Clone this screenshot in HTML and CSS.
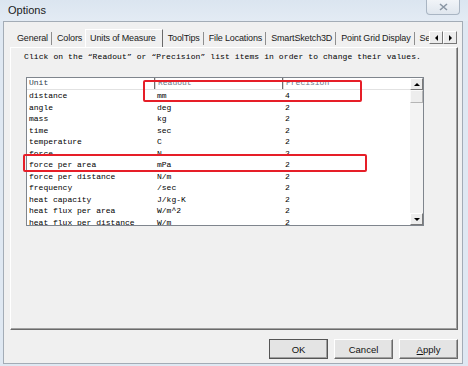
FILE: index.html
```html
<!DOCTYPE html>
<html>
<head>
	<title>Options</title>
	<meta charset="UTF-8">
	<link rel="stylesheet" href="styles.css">
</head>
<body>
	<div class="titlebar">
		<span class="title">Options</span>
		<span class="close-btn">
			<svg width="9" height="8" viewBox="0 0 9 8"><path d="M1 1 L8 7 M8 1 L1 7" stroke="#8a96a4" stroke-width="1.6" fill="none"/></svg>
		</span>
	</div>
	<div class="window">
		<div class="tabs">
			<div class="tab-list">
				<span class="tab">General</span>
				<span class="tab tab-before">Colors</span>
				<span class="tab tab-active">Units of Measure</span>
				<span class="tab">ToolTips</span>
				<span class="tab">File Locations</span>
				<span class="tab">SmartSketch3D</span>
				<span class="tab">Point Grid Display</span>
				<span class="tab tab-last">Se</span>
			</div>
			<div class="tab-arrows">
				<span class="arrow-btn"><i class="tri tri-left"></i></span>
				<span class="arrow-btn"><i class="tri tri-right"></i></span>
			</div>
		</div>
		<div class="panel">
			<p class="hint">Click on the “Readout” or “Precision” list items in order to change their values.</p>
			<div class="list">
				<div class="list-main">
					<div class="list-head">
						<span class="col col-unit">Unit</span>
						<span class="col col-readout">Readout</span>
						<span class="col col-precision">Precision</span>
					</div>
					<div class="list-body">
						<div class="row"><span class="col col-unit">distance</span><span class="col col-readout">mm</span><span class="col col-precision">4</span></div>
						<div class="row"><span class="col col-unit">angle</span><span class="col col-readout">deg</span><span class="col col-precision">2</span></div>
						<div class="row"><span class="col col-unit">mass</span><span class="col col-readout">kg</span><span class="col col-precision">2</span></div>
						<div class="row"><span class="col col-unit">time</span><span class="col col-readout">sec</span><span class="col col-precision">2</span></div>
						<div class="row"><span class="col col-unit">temperature</span><span class="col col-readout">C</span><span class="col col-precision">2</span></div>
						<div class="row"><span class="col col-unit">force</span><span class="col col-readout">N</span><span class="col col-precision">2</span></div>
						<div class="row"><span class="col col-unit">force per area</span><span class="col col-readout">mPa</span><span class="col col-precision">2</span></div>
						<div class="row"><span class="col col-unit">force per distance</span><span class="col col-readout">N/m</span><span class="col col-precision">2</span></div>
						<div class="row"><span class="col col-unit">frequency</span><span class="col col-readout">/sec</span><span class="col col-precision">2</span></div>
						<div class="row"><span class="col col-unit">heat capacity</span><span class="col col-readout">J/kg-K</span><span class="col col-precision">2</span></div>
						<div class="row"><span class="col col-unit">heat flux per area</span><span class="col col-readout">W/m^2</span><span class="col col-precision">2</span></div>
						<div class="row"><span class="col col-unit">heat flux per distance</span><span class="col col-readout">W/m</span><span class="col col-precision">2</span></div>
					</div>
				</div>
				<div class="scrollbar">
					<span class="sb-btn"><i class="tri tri-up"></i></span>
					<span class="sb-thumb"></span>
					<span class="sb-track"></span>
					<span class="sb-btn"><i class="tri tri-down"></i></span>
				</div>
			</div>
			<div class="mark mark-readout"></div>
			<div class="mark mark-row"></div>
		</div>
		<div class="buttons">
			<button class="btn btn-default">OK</button>
			<button class="btn">Cancel</button>
			<button class="btn"><u>A</u>pply</button>
		</div>
	</div>
</body>
</html>
```

FILE: styles.css
```css
body {
	margin: 0;
	width: 468px;
	height: 366px;
	overflow: hidden;
	background-color: #dfe8f2;
	font-family: "Liberation Sans", Arial, sans-serif;
	color: #1a1a1a;
}

.titlebar {
	display: flex;
	justify-content: space-between;
	align-items: flex-start;
	height: 21px;
	background: linear-gradient(#dbe5f0, #e3ebf4);
}

.title {
	margin-left: 8px;
	font-size: 11px;
	line-height: 20px;
}

.close-btn {
	display: flex;
	align-items: center;
	justify-content: center;
	width: 32px;
	height: 14px;
	margin-right: 8px;
	border: 1px solid #a9b5c3;
	border-top: none;
	border-radius: 0 0 4px 4px;
	background: linear-gradient(#f1f4f8, #dfe6ee);
}

.window {
	box-sizing: border-box;
	height: 343px;
	margin: 0 5px 0 3px;
	padding-top: 6px;
	border: 1px solid #a3acb6;
	background-color: #f0f0f0;
}

/* tab strip */

.tabs {
	display: flex;
	align-items: flex-end;
	height: 19px;
	margin: 0 4px 0 6px;
}

.tab-list {
	display: flex;
	align-items: flex-end;
	box-sizing: border-box;
	width: 419px;
	padding-left: 2px;
	overflow: hidden;
	font-size: 9px;
	letter-spacing: -0.15px;
}

.tab {
	flex: none;
	height: 13px;
	margin-bottom: 2px;
	padding: 0 3px 0 5px;
	line-height: 13px;
	border-right: 1px solid #8e8e8e;
	white-space: nowrap;
}

.tab-before,
.tab-last {
	border-right: none;
}

.tab-active {
	position: relative;
	z-index: 2;
	height: 18px;
	margin-bottom: -1px;
	padding: 0 6px 0 4px;
	line-height: 17px;
	border-left: 1px solid #fff;
	border-top: 1px solid #fff;
	border-right: 1px solid #6a6a6a;
	background-color: #f0f0f0;
}

.tab-arrows {
	display: flex;
	margin-bottom: 3px;
}

.arrow-btn {
	display: flex;
	align-items: center;
	justify-content: center;
	width: 12px;
	height: 11px;
	border: 1px solid;
	border-color: #fff #777 #777 #fff;
	background-color: #ececec;
}

.tri {
	display: block;
	width: 0;
	height: 0;
	border: 0 solid transparent;
}

.tri-left {
	border-width: 3px 3px 3px 0;
	border-right-color: #000;
}

.tri-right {
	border-width: 3px 0 3px 3px;
	border-left-color: #000;
}

.tri-up {
	border-width: 0 3px 3px 3px;
	border-bottom-color: #000;
}

.tri-down {
	border-width: 3px 3px 0 3px;
	border-top-color: #000;
}

/* tab page */

.panel {
	position: relative;
	box-sizing: border-box;
	height: 283px;
	margin: 0 4px 0 6px;
	padding: 3px 0 0 13px;
	border: 1px solid;
	border-color: #fff #6a6a6a #6a6a6a #fff;
	box-shadow: inset -1px -1px #a0a0a0;
}

.hint {
	margin: 0;
	font-family: "Liberation Mono", "Courier New", monospace;
	font-size: 8px;
	letter-spacing: 0.1px;
	line-height: 11px;
	color: #000;
	white-space: nowrap;
}

.list {
	display: flex;
	box-sizing: border-box;
	width: 398px;
	height: 149px;
	margin: 15px 0 0 2px;
	border: 1px solid #7f858d;
	background-color: #fff;
}

.list-main {
	flex: 1;
	overflow: hidden;
}

.list-head,
.row {
	display: flex;
	font-family: "Liberation Mono", "Courier New", monospace;
	font-size: 8px;
	white-space: nowrap;
}

.list-head {
	height: 11px;
	line-height: 10px;
	color: #2f3b4c;
	border-bottom: 1px solid #e2e2e2;
}

.row {
	height: 11.5px;
	line-height: 11.5px;
	color: #000;
}

.col {
	box-sizing: border-box;
	padding-left: 2px;
}

.col-unit {
	width: 127px;
}

.col-readout {
	width: 128px;
	padding-left: 3px;
}

.col-precision {
	flex: 1;
	padding-left: 3px;
}

.list-head .col-readout,
.list-head .col-precision {
	color: #6a7585;
	border-left: 1px solid #6f6f6f;
	box-shadow: inset 1px 0 #d8d8d8;
}

.scrollbar {
	display: flex;
	flex-direction: column;
	width: 13px;
	background-color: #f3f3f3;
}

.sb-btn,
.sb-thumb {
	display: flex;
	align-items: center;
	justify-content: center;
	box-sizing: border-box;
	height: 12px;
	border: 1px solid;
	border-color: #fff #7a7a7a #7a7a7a #fff;
	background-color: #ededed;
}

.sb-thumb {
	height: 13px;
	border-color: #fafafa #b5b5b5 #b5b5b5 #fafafa;
}

.sb-track {
	flex: 1;
}

/* red annotation boxes drawn over the list */

.mark {
	position: absolute;
	border: 2px solid #e61e28;
	border-radius: 2px;
}

.mark-readout {
	left: 132px;
	top: 32px;
	width: 215px;
	height: 18px;
}

.mark-row {
	left: 12px;
	top: 106px;
	width: 340px;
	height: 14px;
}

/* dialog buttons */

.buttons {
	display: flex;
	justify-content: flex-end;
	gap: 6px;
	margin: 9px 4px 0 0;
}

.btn {
	box-sizing: border-box;
	width: 59px;
	height: 20px;
	padding: 0;
	font-family: "Liberation Sans", Arial, sans-serif;
	font-size: 9.5px;
	color: #111;
	border: 1px solid;
	border-color: #fff #696969 #696969 #fff;
	box-shadow: inset -1px -1px #a0a0a0;
	background-color: #e4e4e4;
}

.btn-default {
	outline: 1px solid #555;
	outline-offset: -1px;
}
```
